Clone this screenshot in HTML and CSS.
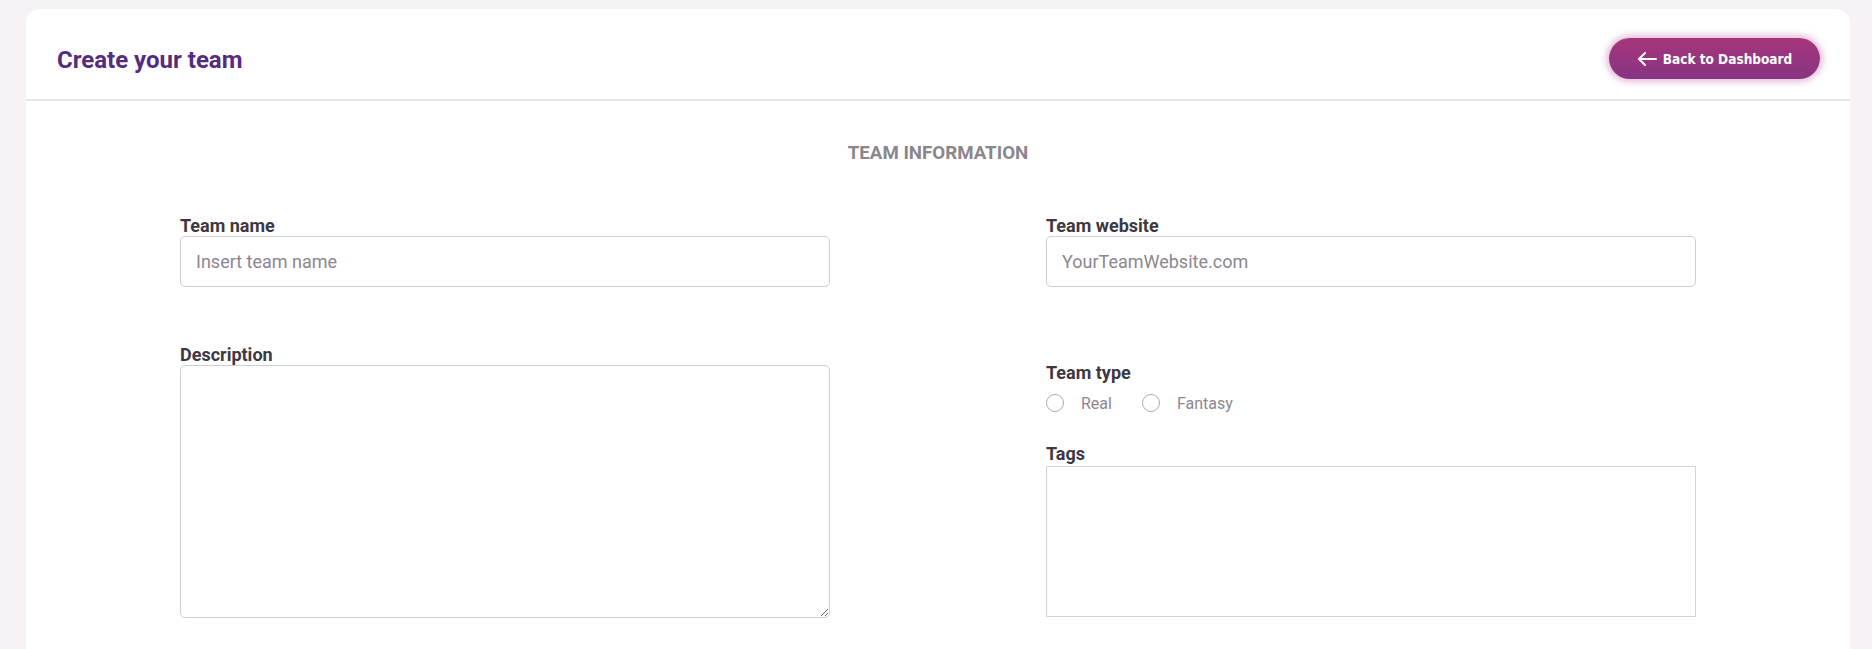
FILE: index.html
```html
<!DOCTYPE html>
<html lang="en">
<head>
    <meta charset="UTF-8">
    <meta name="viewport" content="width=device-width, initial-scale=1.0">
    <title>Create your team</title>
    <link rel="stylesheet" href="styles.css">
</head>
<body>

    <div class="card">
        <div class="card-head">
            <h1 class="title">Create your team</h1>
            <a href="" class="back-btn">
                <svg class="back-icon" width="20" height="14" viewBox="0 0 20 14">
                    <path d="M19 7H2M8 1L2 7l6 6" fill="none" stroke="#fff" stroke-width="2" stroke-linecap="round" stroke-linejoin="round"/>
                </svg>
                Back to Dashboard
            </a>
        </div>

        <div class="card-body">
            <h2 class="section-title">TEAM INFORMATION</h2>

            <div class="form-grid">
                <!-- 左列 -->
                <div class="col">
                    <div class="field">
                        <label class="label">Team name</label>
                        <input class="input" type="text" placeholder="Insert team name">
                    </div>
                    <div class="field field-desc">
                        <label class="label">Description</label>
                        <textarea class="textarea"></textarea>
                    </div>
                </div>

                <!-- 右列 -->
                <div class="col">
                    <div class="field">
                        <label class="label">Team website</label>
                        <input class="input" type="text" placeholder="YourTeamWebsite.com">
                    </div>
                    <div class="field field-type">
                        <label class="label">Team type</label>
                        <div class="radios">
                            <label class="radio"><input type="radio" name="type"> Real</label>
                            <label class="radio"><input type="radio" name="type"> Fantasy</label>
                        </div>
                    </div>
                    <div class="field field-tags">
                        <label class="label">Tags</label>
                        <div class="tags-box"></div>
                    </div>
                </div>
            </div>
        </div>
    </div>

</body>
</html>
```

FILE: styles.css
```css
body,h1,h2,ul,li{
    margin: 0;
    padding: 0;
    font-weight: normal;
    list-style: none;
}
body{
    background: #f7f2f6;
    padding: 9px 22px 0 26px;
    font-family: Roboto, "Liberation Sans", sans-serif;
    overflow: hidden;
}
a{
    text-decoration: none;
}
.card{
    background: #fff;
    border-radius: 14px 14px 0 0;
    min-height: 660px;
}
.card-head{
    display: flex;
    justify-content: space-between;
    align-items: center;
    padding: 29px 30px 20px 31px;
    border-bottom: 2px solid #e7e5e7;
}
.title{
    font-size: 24px;
    font-weight: bold;
    color: #552d80;
    line-height: 28px;
    padding-top: 2px;
}
.back-btn{
    display: flex;
    align-items: center;
    justify-content: center;
    gap: 6px;
    width: 211px;
    height: 41px;
    border-radius: 21px;
    background: linear-gradient(#a6367a, #873482);
    box-shadow: 0 0 6px 3px rgba(176, 70, 150, 0.35);
    color: #fff;
    font-family: "DejaVu Sans", sans-serif;
    font-stretch: condensed;
    font-size: 13.5px;
    font-weight: bold;
}
.back-icon{
    display: block;
}
.card-body{
    padding: 0 154px 0 154px;
}
.section-title{
    margin-top: 41px;
    text-align: center;
    font-size: 18.7px;
    line-height: 22px;
    font-weight: bold;
    color: #8a868b;
}
.form-grid{
    display: grid;
    grid-template-columns: 1fr 1fr;
    column-gap: 216px;
    margin-top: 52px;
}
.col{
    display: flex;
    flex-direction: column;
}
.field{
    display: flex;
    flex-direction: column;
}
.label{
    display: block;
    font-size: 18px;
    line-height: 20px;
    font-weight: bold;
    color: #3e3842;
}
.input{
    height: 51px;
    box-sizing: border-box;
    border: 1px solid #cfcdcf;
    border-radius: 5px;
    padding: 0 15px;
    font-family: Roboto, sans-serif;
    font-size: 18px;
    color: #3e3842;
    outline: none;
}
.input::placeholder{
    color: #8b8690;
}
.field-desc{
    margin-top: 58px;
}
.textarea{
    height: 253px;
    box-sizing: border-box;
    border: 1px solid #cfcdcf;
    border-radius: 5px;
    font-family: Roboto, sans-serif;
    font-size: 16px;
    outline: none;
}
.field-type{
    margin-top: 76px;
}
.radios{
    display: flex;
    gap: 30px;
    margin-top: 8px;
    height: 24px;
    align-items: center;
}
.radio{
    display: flex;
    align-items: center;
    gap: 17px;
    font-size: 16px;
    color: #8b8690;
}
.radio input{
    appearance: none;
    margin: 0;
    width: 18px;
    height: 18px;
    border: 1px solid #b6a4bc;
    border-radius: 50%;
    background: #fff;
}
.field-tags{
    margin-top: 29px;
}
.tags-box{
    margin-top: 2px;
    height: 151px;
    box-sizing: border-box;
    border: 1px solid #d6d4d6;
}
```
